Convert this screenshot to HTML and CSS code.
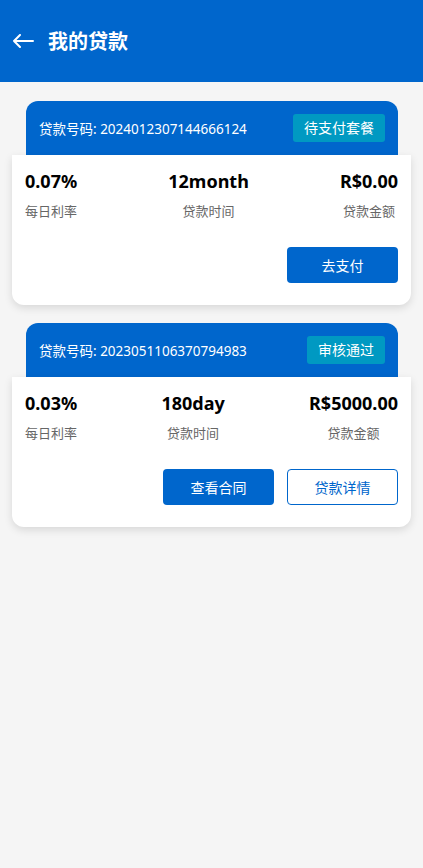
FILE: index.html
```html
<!DOCTYPE html>
<html lang="zh">
<head>
<meta charset="utf-8">
<title>我的贷款</title>
<link rel="stylesheet" href="styles.css">
</head>
<body>
<header class="topbar">
  <svg class="back" width="22" height="14" viewBox="0 0 22 14"><path d="M21 7H2M8 1L2 7l6 6" fill="none" stroke="#fff" stroke-width="2" stroke-linecap="round" stroke-linejoin="round"/></svg>
  <h1 class="title">我的贷款</h1>
</header>
<main class="list">
  <section class="loan">
    <div class="loan-head">
      <span class="loan-no">贷款号码: 2024012307144666124</span>
      <span class="badge">待支付套餐</span>
    </div>
    <div class="loan-body">
      <div class="stats">
        <div class="stat"><div class="val">0.07%</div><div class="lab">每日利率</div></div>
        <div class="stat"><div class="val">12month</div><div class="lab">贷款时间</div></div>
        <div class="stat"><div class="val">R$0.00</div><div class="lab">贷款金额</div></div>
      </div>
      <div class="actions">
        <button class="btn primary">去支付</button>
      </div>
    </div>
  </section>
  <section class="loan">
    <div class="loan-head">
      <span class="loan-no">贷款号码: 2023051106370794983</span>
      <span class="badge">审核通过</span>
    </div>
    <div class="loan-body">
      <div class="stats">
        <div class="stat"><div class="val">0.03%</div><div class="lab">每日利率</div></div>
        <div class="stat"><div class="val">180day</div><div class="lab">贷款时间</div></div>
        <div class="stat"><div class="val">R$5000.00</div><div class="lab">贷款金额</div></div>
      </div>
      <div class="actions">
        <button class="btn primary">查看合同</button>
        <button class="btn outline">贷款详情</button>
      </div>
    </div>
  </section>
</main>
</body>
</html>
```
FILE: styles.css
```css
* { box-sizing: border-box; }
html, body { margin: 0; padding: 0; }
body {
  background: #f5f5f5;
  font-family: "Noto Sans", "Noto Sans CJK SC", sans-serif;
  min-height: 868px;
}
.topbar {
  height: 82px;
  background: #0066cc;
  display: flex;
  align-items: center;
  padding: 2px 0 0 12px;
  gap: 14px;
}
.back { display: block; margin-top: -2px; }
.title {
  margin: 0;
  color: #fff;
  font-size: 20px;
  font-weight: 700;
  line-height: 1;
}
.list {
  padding: 19px 12px 0;
  display: flex;
  flex-direction: column;
  gap: 18px;
}
.loan-head {
  margin: 0 13px 0 14px;
  height: 54px;
  background: #0066cc;
  border-radius: 12px 12px 0 0;
  display: flex;
  align-items: center;
  justify-content: space-between;
  padding: 0 13px 0 13px;
  color: #fff;
}
.loan-no { font-size: 13.5px; line-height: 1; padding-top: 3px; }
.badge {
  background: #0099c2;
  color: #fff;
  font-size: 14px;
  height: 28px;
  line-height: 28px;
  padding: 0 11px;
  border-radius: 3px;
}
.loan-body {
  background: #fff;
  border-radius: 0 0 12px 12px;
  box-shadow: 0 3px 8px rgba(0,0,0,0.12);
  padding: 14px 13px 22px;
  height: 150px;
}
.stats {
  display: flex;
  justify-content: space-between;
}
.stat { text-align: center; }
.val {
  font-size: 18px;
  font-weight: 700;
  color: #000;
  line-height: 24px;
}
.lab {
  font-size: 13px;
  color: #666;
  line-height: 18px;
  margin-top: 9px;
}
.actions {
  display: flex;
  justify-content: flex-end;
  gap: 13px;
  margin-top: 27px;
}
.btn {
  width: 111px;
  height: 36px;
  border-radius: 4px;
  font-family: inherit;
  font-size: 14px;
  cursor: pointer;
}
.primary {
  background: #0066cc;
  color: #fff;
  border: none;
}
.outline {
  background: #fff;
  color: #0066cc;
  border: 1px solid #0066cc;
}
```
